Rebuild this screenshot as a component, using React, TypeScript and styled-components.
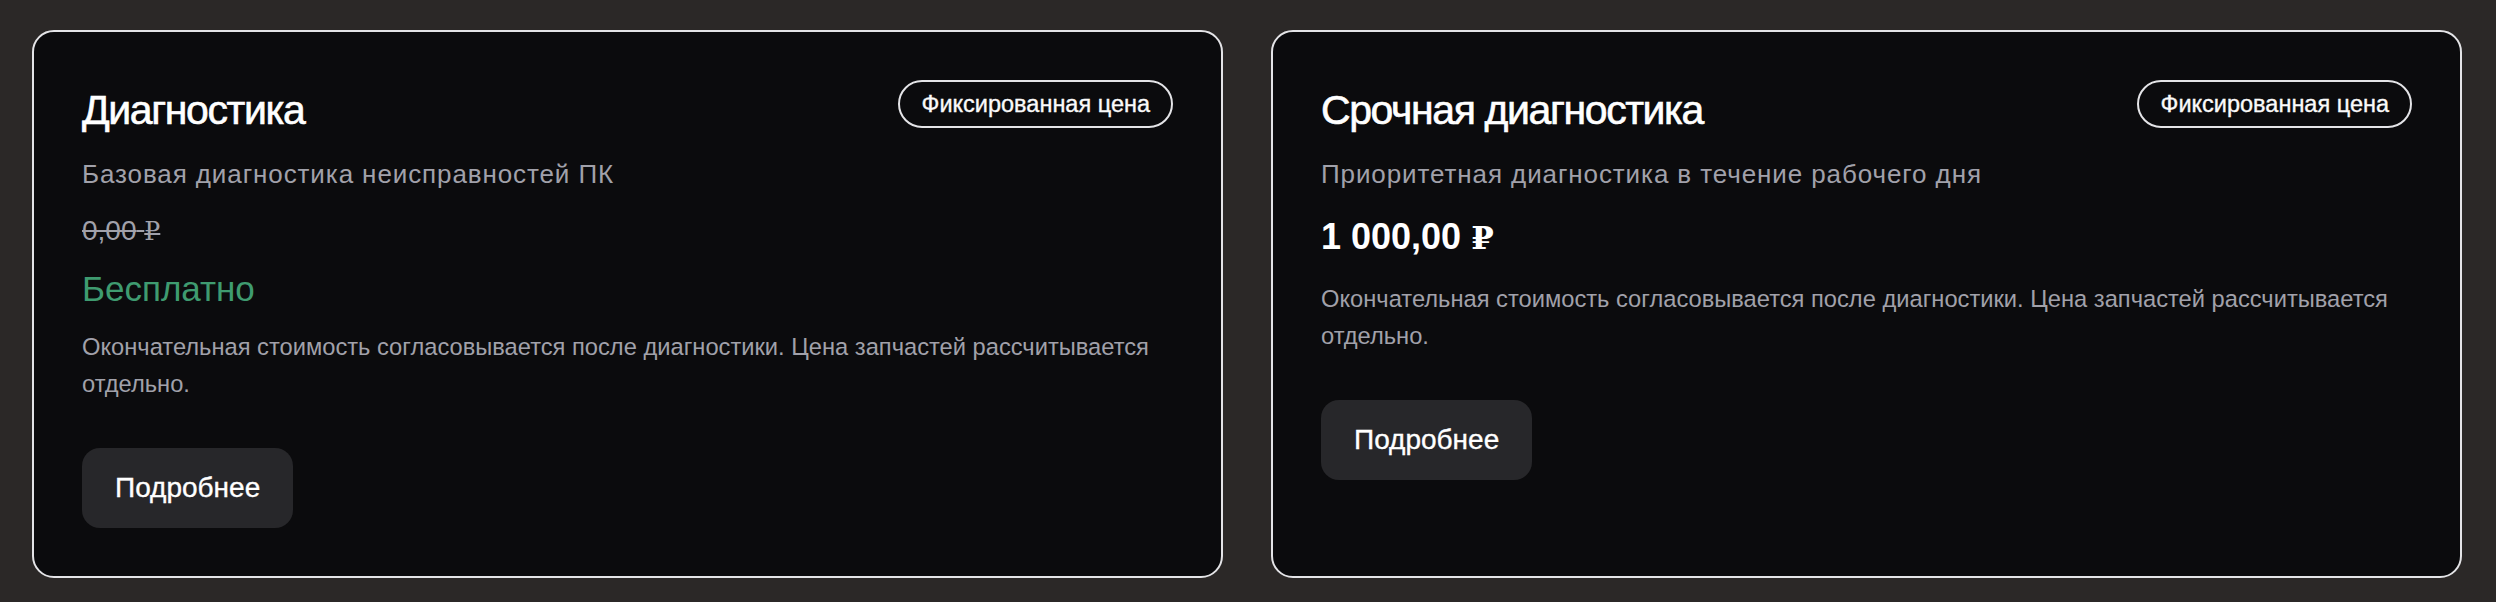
import React from 'react';
import styled, { createGlobalStyle } from 'styled-components';

const GlobalStyle = createGlobalStyle`
  html, body {
    margin: 0;
    background: #2b2827;
  }

  body {
    font-family: 'Liberation Sans', Arial, sans-serif;
    -webkit-font-smoothing: antialiased;
  }
`;

const StyledPage = styled.div`
  display: grid;
  grid-template-columns: 1fr 1fr;
  gap: 48px;
  padding: 30px 34px 24px 32px;
  background: #2b2827;
`;

const Card = styled.div`
  display: flex;
  flex-direction: column;
  background: #0b0b0d;
  border: 2px solid #e4e4e7;
  border-radius: 22px;
  padding: 48px;
`;

const Header = styled.div`
  display: flex;
  justify-content: space-between;
  align-items: flex-start;
  gap: 24px;
`;

const Title = styled.h3`
  margin: 0;
  font-size: 41px;
  line-height: 60px;
  font-weight: 500;
  letter-spacing: -1.4px;
  color: #ffffff;
  -webkit-text-stroke: 0.6px #ffffff;
`;

const Badge = styled.span`
  display: inline-flex;
  align-items: center;
  box-sizing: border-box;
  height: 48px;
  padding: 0 21px 0 22px;
  border: 2px solid #e4e4e7;
  border-radius: 999px;
  font-size: 23.5px;
  font-weight: 500;
  color: #fafafa;
  -webkit-text-stroke: 0.35px #fafafa;
  white-space: nowrap;
`;

const Subtitle = styled.p`
  margin: 15px 0 0;
  font-size: 26px;
  line-height: 39px;
  letter-spacing: 0.9px;
  color: #a1a1aa;
`;

const Prices = styled.div`
  display: flex;
  flex-direction: column;
  margin-top: 16px;
`;

const OldPrice = styled.span`
  font-size: 28px;
  line-height: 42px;
  color: #a1a1aa;
  text-decoration: line-through;
`;

const FreeLabel = styled.span`
  margin-top: 12px;
  font-size: 35px;
  line-height: 48px;
  color: #3f9b70;
`;

const Price = styled.span`
  font-size: 36px;
  line-height: 54px;
  font-weight: 700;
  color: #ffffff;
`;

const Ruble = styled.span`
  font-family: 'Liberation Serif', 'DejaVu Serif', serif;
  font-size: 0.9em;
`;

const Note = styled.p`
  margin: 16px 0 0;
  font-size: 23.7px;
  line-height: 37px;
  color: #a1a1aa;
`;

const MoreButton = styled.button`
  align-self: flex-start;
  margin-top: 45px;
  height: 80px;
  padding: 0 33px;
  border: none;
  border-radius: 18px;
  background: #27272a;
  color: #ffffff;
  font-family: inherit;
  font-size: 28px;
  -webkit-text-stroke: 0.35px #ffffff;
  cursor: pointer;
`;

const NOTE =
  'Окончательная стоимость согласовывается после диагностики. Цена запчастей рассчитывается отдельно.';

const services = [
  {
    title: 'Диагностика',
    subtitle: 'Базовая диагностика неисправностей ПК',
    price: '0,00',
    free: true,
  },
  {
    title: 'Срочная диагностика',
    subtitle: 'Приоритетная диагностика в течение рабочего дня',
    price: '1\u00a0000,00',
    free: false,
  },
];

const Money = ({ value }: { value: string }) => (
  <>
    {value}
    {'\u00a0'}
    <Ruble>₽</Ruble>
  </>
);

export default function App() {
  return (
    <>
      <GlobalStyle />
      <StyledPage>
        {services.map((s, i) => (
          <Card key={i}>
            <Header>
              <Title>{s.title}</Title>
              <Badge>Фиксированная цена</Badge>
            </Header>
            <Subtitle>{s.subtitle}</Subtitle>
            <Prices>
              {s.free ? (
                <>
                  <OldPrice>
                    <Money value={s.price} />
                  </OldPrice>
                  <FreeLabel>Бесплатно</FreeLabel>
                </>
              ) : (
                <Price>
                  <Money value={s.price} />
                </Price>
              )}
            </Prices>
            <Note>{NOTE}</Note>
            <MoreButton>Подробнее</MoreButton>
          </Card>
        ))}
      </StyledPage>
    </>
  );
}
